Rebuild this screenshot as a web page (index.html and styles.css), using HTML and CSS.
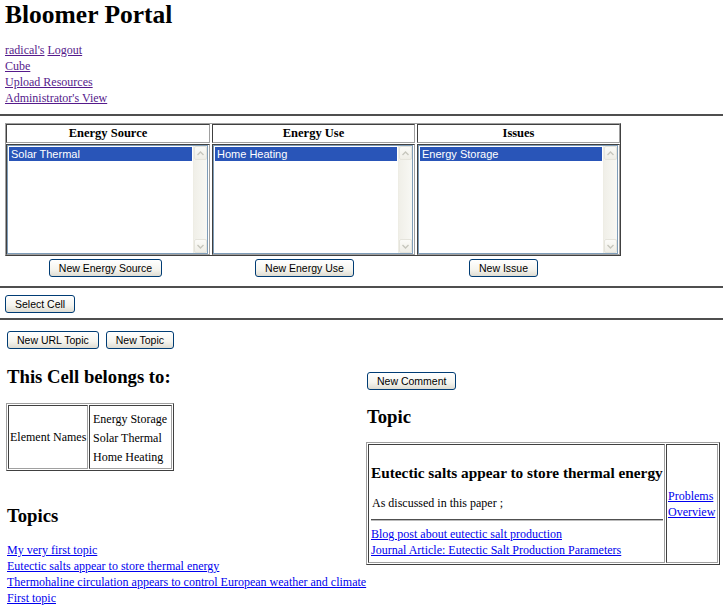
FILE: index.html
```html
<!DOCTYPE html>
<html lang="en">
<head>
<meta charset="utf-8">
<title>Bloomer Portal</title>
<link rel="stylesheet" href="styles.css">
</head>
<body>
<header class="masthead">
  <h1 class="site-title">Bloomer Portal</h1>
  <nav class="nav">
    <div><a class="visited" href="#">radical's</a> <a class="visited" href="#">Logout</a></div>
    <div><a class="visited" href="#">Cube</a></div>
    <div><a class="visited" href="#">Upload Resources</a></div>
    <div><a class="visited" href="#">Administrator's View</a></div>
  </nav>
</header>
<hr class="rule rule-top">

<section class="chooser">
  <div class="chooser-grid">
    <div class="hcell">Energy Source</div>
    <div class="hcell">Energy Use</div>
    <div class="hcell">Issues</div>
    <div class="lcell">
      <div class="listbox">
        <div class="options"><div class="option selected">Solar Thermal</div></div>
        <div class="scrollbar">
          <span class="sb-btn"><svg width="7" height="5" viewBox="0 0 7 5"><path d="M0.5 4 L3.5 1 L6.5 4" fill="none" stroke="#c6c6bd" stroke-width="1.4"/></svg></span>
          <span class="sb-track"></span>
          <span class="sb-btn"><svg width="7" height="5" viewBox="0 0 7 5"><path d="M0.5 1 L3.5 4 L6.5 1" fill="none" stroke="#c6c6bd" stroke-width="1.4"/></svg></span>
        </div>
      </div>
    </div>
    <div class="lcell">
      <div class="listbox">
        <div class="options"><div class="option selected">Home Heating</div></div>
        <div class="scrollbar">
          <span class="sb-btn"><svg width="7" height="5" viewBox="0 0 7 5"><path d="M0.5 4 L3.5 1 L6.5 4" fill="none" stroke="#c6c6bd" stroke-width="1.4"/></svg></span>
          <span class="sb-track"></span>
          <span class="sb-btn"><svg width="7" height="5" viewBox="0 0 7 5"><path d="M0.5 1 L3.5 4 L6.5 1" fill="none" stroke="#c6c6bd" stroke-width="1.4"/></svg></span>
        </div>
      </div>
    </div>
    <div class="lcell">
      <div class="listbox">
        <div class="options"><div class="option selected">Energy Storage</div></div>
        <div class="scrollbar">
          <span class="sb-btn"><svg width="7" height="5" viewBox="0 0 7 5"><path d="M0.5 4 L3.5 1 L6.5 4" fill="none" stroke="#c6c6bd" stroke-width="1.4"/></svg></span>
          <span class="sb-track"></span>
          <span class="sb-btn"><svg width="7" height="5" viewBox="0 0 7 5"><path d="M0.5 1 L3.5 4 L6.5 1" fill="none" stroke="#c6c6bd" stroke-width="1.4"/></svg></span>
        </div>
      </div>
    </div>
  </div>
  <div class="chooser-actions">
    <div class="action"><button class="btn">New Energy Source</button></div>
    <div class="action"><button class="btn">New Energy Use</button></div>
    <div class="action"><button class="btn">New Issue</button></div>
  </div>
</section>

<hr class="rule rule-mid">
<div class="bar bar-select"><button class="btn">Select Cell</button></div>
<hr class="rule rule-low">
<div class="bar bar-topics"><button class="btn">New URL Topic</button><button class="btn">New Topic</button></div>

<main class="lower">
  <div class="col-left">
    <h3 class="section-title belongs">This Cell belongs to:</h3>
    <div class="elements">
      <div class="ecell ename">Element Names</div>
      <div class="ecell evalues">
        <div>Energy Storage</div>
        <div>Solar Thermal</div>
        <div>Home Heating</div>
      </div>
    </div>
    <h3 class="section-title topics-title">Topics</h3>
    <ul class="topic-list">
      <li><a href="#">My very first topic</a></li>
      <li><a href="#">Eutectic salts appear to store thermal energy</a></li>
      <li><a href="#">Thermohaline circulation appears to control European weather and climate</a></li>
      <li><a href="#">First topic</a></li>
    </ul>
  </div>
  <div class="col-right">
    <button class="btn btn-comment">New Comment</button>
    <h3 class="section-title topic-title">Topic</h3>
    <div class="topic-box">
      <div class="tcell tmain">
        <h4 class="topic-head">Eutectic salts appear to store thermal energy</h4>
        <p class="topic-text">As discussed in this paper ;</p>
        <hr class="rule rule-inner">
        <div class="topic-links">
          <div><a href="#">Blog post about eutectic salt production</a></div>
          <div><a href="#">Journal Article: Eutectic Salt Production Parameters</a></div>
        </div>
      </div>
      <div class="tcell tside">
        <div><a href="#">Problems</a></div>
        <div><a href="#">Overview</a></div>
      </div>
    </div>
  </div>
</main>
</body>
</html>
```
FILE: styles.css
```css
html, body {
  margin: 0;
  padding: 0;
  background: #ffffff;
}
body {
  font-family: "Liberation Serif", "Times New Roman", serif;
  font-size: 12px;
  color: #000000;
  width: 723px;
  overflow: hidden;
}
a {
  color: #0000ee;
  text-decoration: underline;
}
a.visited {
  color: #551a8b;
}

/* header */
.masthead {
  padding-left: 5px;
}
.site-title {
  margin: 0;
  font-size: 25.5px;
  line-height: 29px;
  font-weight: bold;
}
.nav {
  margin-top: 13px;
  line-height: 16px;
}

/* rules */
.rule {
  border: 0;
  height: 2px;
  background: #4f4f4f;
  margin: 0;
}
.rule-top { margin-top: 8px; }
.rule-mid { margin-top: 9px; }
.rule-low { margin-top: 5px; }

/* chooser */
.chooser {
  padding-left: 5px;
  margin-top: 7px;
}
.chooser-grid {
  width: 616px;
  box-sizing: border-box;
  display: grid;
  grid-template-columns: 204px 203px 203px;
  grid-template-rows: 19px 111px;
  column-gap: 2px;
  row-gap: 1px;
  border: 1px solid;
  border-color: #a0a0a0 #404040 #404040 #a0a0a0;
  padding: 0 1px 0 0;
}
.hcell, .lcell, .ecell, .tcell {
  box-sizing: border-box;
  border: 1px solid;
  border-color: #404040 #a0a0a0 #a0a0a0 #404040;
}
.hcell {
  font-weight: bold;
  font-size: 12.5px;
  text-align: center;
  line-height: 17px;
}
.lcell {
  padding: 0 1px 0 0;
}
.listbox {
  box-sizing: border-box;
  height: 109px;
  display: flex;
  border: 1px solid #7f9db9;
  background: #ffffff;
}
.options {
  flex: 1;
  padding: 1px 1px 0 1px;
}
.option {
  height: 14px;
  line-height: 14px;
  font-family: "Liberation Sans", Arial, sans-serif;
  font-size: 11px;
  padding-left: 2px;
  color: #000;
}
.option.selected {
  background: #2955b8;
  color: #ffffff;
}
.scrollbar {
  width: 13px;
  display: flex;
  flex-direction: column;
  background: #f3f3ee;
  border-left: 1px solid #eeede5;
}
.sb-btn {
  height: 14px;
  box-sizing: border-box;
  display: flex;
  align-items: center;
  justify-content: center;
  border: 1px solid #e5e4dc;
  border-radius: 2px;
  background: linear-gradient(#fbfbf8, #efeee7);
}
.sb-track {
  flex: 1;
  background: linear-gradient(90deg, #f0efe8, #f8f8f4);
}

.chooser-actions {
  margin-top: 3px;
  display: grid;
  grid-template-columns: 199px 199px 199px;
  padding-left: 1px;
}
.action {
  display: flex;
  justify-content: center;
}

/* buttons */
.btn {
  height: 18px;
  box-sizing: border-box;
  margin: 0;
  padding: 0 9px;
  font-family: "Liberation Sans", Arial, sans-serif;
  font-size: 10.5px;
  line-height: 14px;
  color: #000;
  border: 1px solid #003c74;
  border-radius: 3px;
  background: linear-gradient(#ffffff 0%, #f5f4ee 60%, #dedcd2 100%);
}

.bar-select {
  margin-top: 7px;
  padding-left: 5px;
}
.bar-topics {
  margin-top: 11px;
  padding-left: 7px;
  display: flex;
  gap: 7px;
}

/* lower */
.lower {
  display: grid;
  grid-template-columns: 360px 354px;
  align-items: start;
  padding-left: 6px;
}
.section-title {
  margin: 0;
  font-size: 18.72px;
  line-height: 22px;
  font-weight: bold;
}
.belongs {
  margin-top: 17px;
  padding-left: 1px;
}
.elements {
  margin-top: 15px;
  width: 168px;
  box-sizing: border-box;
  display: grid;
  grid-template-columns: 80px 83px;
  column-gap: 1px;
  padding: 1px;
  border: 1px solid;
  border-color: #a0a0a0 #404040 #404040 #a0a0a0;
}
.ename {
  display: flex;
  align-items: center;
  padding-left: 1px;
}
.evalues {
  padding: 4px 2px 1px 3px;
  line-height: 19px;
}
.topics-title {
  margin-top: 34px;
  padding-left: 1px;
}
.topic-list {
  list-style: none;
  margin: 15px 0 0 0;
  padding: 0 0 0 1px;
  line-height: 16px;
  white-space: nowrap;
}

.btn-comment {
  margin-top: 23px;
  margin-left: 1px;
  display: block;
}
.topic-title {
  margin-top: 16px;
  padding-left: 1px;
}
.topic-box {
  margin-top: 14px;
  width: 354px;
  box-sizing: border-box;
  display: grid;
  grid-template-columns: 297px 52px;
  column-gap: 1px;
  padding: 1px;
  border: 1px solid;
  border-color: #a0a0a0 #404040 #404040 #a0a0a0;
}
.tmain {
  padding: 1px 1px 4px 2px;
}
.topic-head {
  margin: 18px 0 0 0;
  font-size: 15.3px;
  line-height: 18px;
  font-weight: bold;
  white-space: nowrap;
}
.topic-text {
  margin: 13px 0 0 1px;
  line-height: 16px;
}
.rule-inner {
  margin-top: 8px;
  height: 1px;
  border-bottom: 1px solid #bbbbbb;
  background: #505050;
}
.topic-links {
  margin-top: 5px;
  line-height: 16px;
  white-space: nowrap;
}
.tside {
  display: flex;
  flex-direction: column;
  justify-content: center;
  line-height: 16px;
  padding-left: 1px;
}
```
